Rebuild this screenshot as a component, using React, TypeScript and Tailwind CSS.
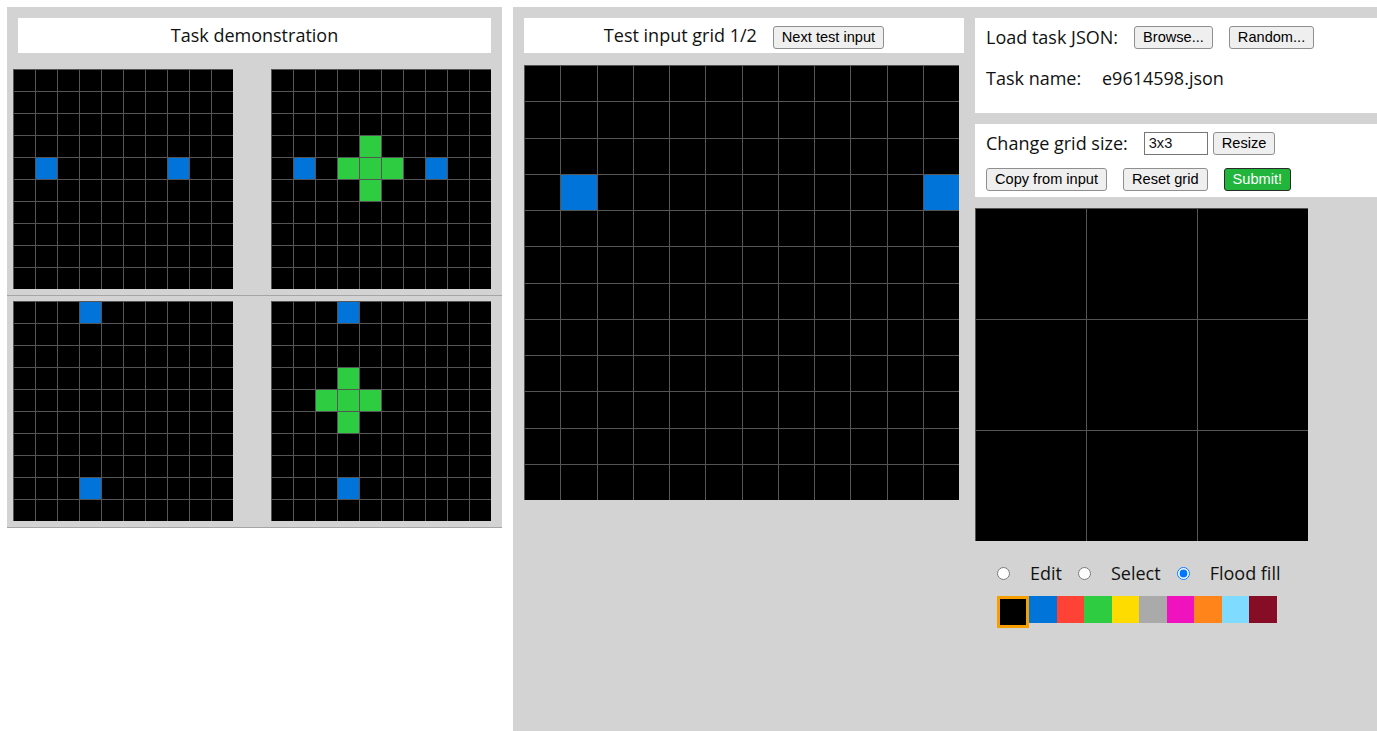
import { useState } from 'react';

const PALETTE = ['#000000', '#0074D9', '#FF4136', '#2ECC40', '#FFDC00', '#AAAAAA', '#F012BE', '#FF851B', '#7FDBFF', '#870C25'];

function makeGrid(n: number, marks: [number, number, number][]) {
  const g = Array.from({ length: n }, () => Array(n).fill(0));
  marks.forEach(([r, c, v]) => (g[r][c] = v));
  return g;
}

const plus = (r: number, c: number): [number, number, number][] => [
  [r - 1, c, 3],
  [r, c - 1, 3],
  [r, c, 3],
  [r, c + 1, 3],
  [r + 1, c, 3],
];

const pairs = [
  {
    input: makeGrid(10, [[4, 1, 1], [4, 7, 1]]),
    output: makeGrid(10, [[4, 1, 1], [4, 7, 1], ...plus(4, 4)]),
  },
  {
    input: makeGrid(10, [[0, 3, 1], [8, 3, 1]]),
    output: makeGrid(10, [[0, 3, 1], [8, 3, 1], ...plus(4, 3)]),
  },
];

const testInput = makeGrid(12, [[3, 1, 1], [3, 11, 1]]);

function Grid({ cells, size }: { cells: number[][]; size: number }) {
  const n = cells.length;
  return (
    <div
      className="grid gap-px bg-[#555555] pl-px pt-px shrink-0"
      style={{
        width: size,
        height: size,
        gridTemplateColumns: `repeat(${n}, 1fr)`,
        gridTemplateRows: `repeat(${n}, 1fr)`,
      }}
    >
      {cells.flat().map((v, i) => (
        <div key={i} style={{ backgroundColor: PALETTE[v] }} />
      ))}
    </div>
  );
}

function Btn({ children, green, className = '' }: { children: React.ReactNode; green?: boolean; className?: string }) {
  return (
    <button
      className={`h-[23px] px-[8px] rounded-[3px] border text-[14.6px] leading-none font-['Liberation_Sans',Arial,sans-serif] ${
        green ? 'bg-[#21b53c] border-[#2a2a2a] text-white' : 'bg-[#efefef] border-[#8f8f8f] text-black'
      } ${className}`}
    >
      {children}
    </button>
  );
}

export default function App() {
  const [selected, setSelected] = useState(0);
  const [mode, setMode] = useState('flood');
  const output = makeGrid(3, []);

  return (
    <div className="flex items-start gap-[11px] pl-[7px] pt-[7px] h-[731px] bg-white text-[18px] text-[#111] font-['Open_Sans',sans-serif] overflow-hidden">
      {/* Task demonstration */}
      <div className="w-[495px] bg-[#d3d3d3]">
        <div className="mx-[11px] mt-[11px] mb-[11px] h-[35px] bg-white flex items-center justify-center">
          Task demonstration
        </div>
        {pairs.map((p, i) => (
          <div key={i} className="flex gap-[38px] pl-[6px] pt-[5px] pb-[6px] border-b border-[#a5a5a5]">
            <Grid cells={p.input} size={220} />
            <Grid cells={p.output} size={220} />
          </div>
        ))}
      </div>

      {/* Test area */}
      <div className="flex-1 self-stretch bg-[#d3d3d3] flex gap-[11px] pl-[11px] pt-[11px]">
        <div className="w-[440px] flex flex-col gap-[12px]">
          <div className="h-[35px] bg-white flex items-center justify-center gap-[16px]">
            <span>Test input grid 1/2</span>
            <Btn className="mt-[3px]">Next test input</Btn>
          </div>
          <Grid cells={testInput} size={435} />
        </div>

        <div className="flex-1 flex flex-col gap-[11px]">
          <div className="h-[95px] bg-white pl-[11px]">
            <div className="mt-[7px] h-[24px] flex items-center gap-[16px]">
              <span>Load task JSON:</span>
              <Btn>Browse...</Btn>
              <Btn>Random...</Btn>
            </div>
            <div className="mt-[17px] h-[24px] flex items-center">
              <span className="w-[116px]">Task name:</span>
              <span>e9614598.json</span>
            </div>
          </div>

          <div className="h-[73px] bg-white pl-[11px]">
            <div className="mt-[7px] h-[24px] flex items-center">
              <span className="mr-[16px]">Change grid size:</span>
              <input
                defaultValue="3x3"
                className="w-[64px] h-[23px] border border-[#767676] px-[4px] text-[14.6px] font-['Liberation_Sans',Arial,sans-serif] outline-none"
              />
              <span className="ml-[5px] flex">
                <Btn>Resize</Btn>
              </span>
            </div>
            <div className="mt-[13px] flex items-center gap-[16px]">
              <Btn>Copy from input</Btn>
              <Btn>Reset grid</Btn>
              <Btn green>Submit!</Btn>
            </div>
          </div>

          <Grid cells={output} size={333} />

          <div className="mt-[9px] pl-[22px] flex items-center h-[24px]">
            {[
              ['edit', 'Edit'],
              ['select', 'Select'],
              ['flood', 'Flood fill'],
            ].map(([k, label]) => (
              <label key={k} className="flex items-center mr-[16px]">
                <input
                  type="radio"
                  name="mode"
                  checked={mode === k}
                  onChange={() => setMode(k)}
                  className="m-0 w-[13px] h-[13px] mr-[20px]"
                />
                <span>{label}</span>
              </label>
            ))}
          </div>

          <div className="pl-[22px] flex items-start">
            {PALETTE.map((c, i) => (
              <div
                key={c}
                onClick={() => setSelected(i)}
                className={
                  i === selected
                    ? 'w-[32px] h-[32px] border-[3px] border-[#f5a000]'
                    : 'w-[27.5px] h-[27px]'
                }
                style={{ backgroundColor: c }}
              />
            ))}
          </div>
        </div>
      </div>
    </div>
  );
}
